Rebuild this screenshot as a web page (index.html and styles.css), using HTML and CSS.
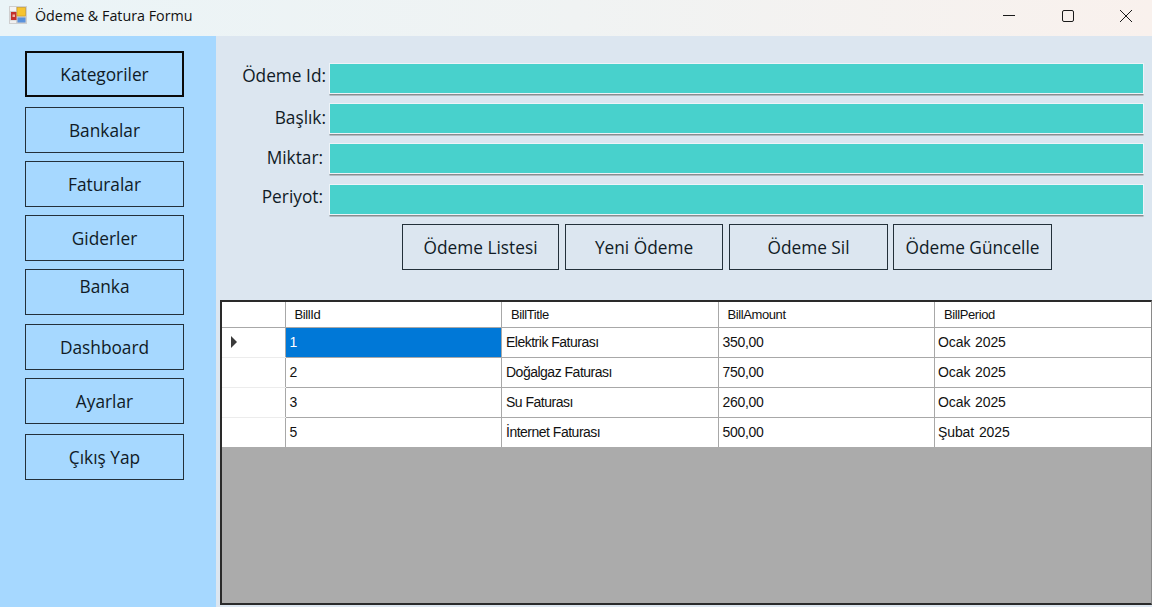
FILE: index.html
```html
<!DOCTYPE html>
<html lang="tr">
<head>
  <meta charset="UTF-8" />
  <title>Ödeme &amp; Fatura Formu</title>
  <link rel="stylesheet" href="styles.css">
</head>
<body>
  <div class="window">
    <!-- Başlık çubuğu -->
    <header class="titlebar">
      <svg class="app-icon" width="18" height="18" viewBox="0 0 18 18">
        <rect width="18" height="18" fill="#cfcfcf"/>
        <rect x="1" y="1" width="6" height="4" fill="#f4f4f4"/>
        <rect x="1" y="14.5" width="6" height="2.5" fill="#f0f0f0"/>
        <rect x="2" y="6" width="5.5" height="8" fill="#c32f2a"/>
        <rect x="3.5" y="8.5" width="2.5" height="2.5" fill="#efb3a4"/>
        <rect x="8" y="1.5" width="8.5" height="8.5" fill="#f7c430" stroke="#c99a1c" stroke-width="0.6"/>
        <rect x="8.5" y="11.5" width="8" height="5" fill="#5a92dc"/>
      </svg>
      <span class="title">Ödeme &amp; Fatura Formu</span>
      <div class="controls">
        <svg class="ctrl" width="46" height="36" viewBox="0 0 46 36"><path d="M17 15.5H29" stroke="#1a1a1a" stroke-width="1" fill="none"/></svg>
        <svg class="ctrl" width="46" height="36" viewBox="0 0 46 36"><rect x="17.5" y="10.5" width="11" height="11" rx="1.5" stroke="#1a1a1a" stroke-width="1" fill="none"/></svg>
        <svg class="ctrl" width="46" height="36" viewBox="0 0 46 36"><path d="M17 10L29 22M29 10L17 22" stroke="#1a1a1a" stroke-width="1" fill="none"/></svg>
      </div>
    </header>

    <div class="content">
      <!-- Sol menü -->
      <nav class="sidebar">
        <button class="nav-btn active">Kategoriler</button>
        <button class="nav-btn gap-11">Bankalar</button>
        <button class="nav-btn gap-9">Faturalar</button>
        <button class="nav-btn gap-9">Giderler</button>
        <button class="nav-btn gap-8 text-high">Banka</button>
        <button class="nav-btn gap-10">Dashboard</button>
        <button class="nav-btn gap-9">Ayarlar</button>
        <button class="nav-btn gap-11">Çıkış Yap</button>
      </nav>

      <main class="main">
        <!-- Form -->
        <section class="form">
          <div class="row"><label class="lbl">Ödeme Id:</label><input class="field" type="text" /></div>
          <div class="row"><label class="lbl low">Başlık:</label><input class="field" type="text" /></div>
          <div class="row"><label class="lbl low inset">Miktar:</label><input class="field" type="text" /></div>
          <div class="row row-last"><label class="lbl inset">Periyot:</label><input class="field" type="text" /></div>
          <div class="actions">
            <button class="act-btn">Ödeme Listesi</button>
            <button class="act-btn">Yeni Ödeme</button>
            <button class="act-btn">Ödeme Sil</button>
            <button class="act-btn">Ödeme Güncelle</button>
          </div>
        </section>

        <!-- Liste -->
        <section class="grid-box">
          <table class="grid">
            <thead>
              <tr><th class="rowhead"></th><th>BillId</th><th>BillTitle</th><th>BillAmount</th><th>BillPeriod</th></tr>
            </thead>
            <tbody>
              <tr><td class="rowhead"><span class="pointer"></span></td><td class="selected">1</td><td>Elektrik Faturası</td><td>350,00</td><td>Ocak 2025</td></tr>
              <tr><td class="rowhead"></td><td>2</td><td>Doğalgaz Faturası</td><td>750,00</td><td>Ocak 2025</td></tr>
              <tr><td class="rowhead"></td><td>3</td><td>Su Faturası</td><td>260,00</td><td>Ocak 2025</td></tr>
              <tr><td class="rowhead"></td><td>5</td><td>İnternet Faturası</td><td>500,00</td><td>Şubat 2025</td></tr>
            </tbody>
          </table>
        </section>
      </main>
    </div>
  </div>
</body>
</html>
```
FILE: styles.css
```css
* { box-sizing: border-box; }
html, body { margin: 0; height: 100%; overflow: hidden; }
body { font-family: "Open Sans", "Noto Sans", sans-serif; color: #111; }
button, input { font-family: inherit; margin: 0; }

.window { display: flex; flex-direction: column; height: 607px; width: 1152px; }

.titlebar { display: flex; align-items: center; height: 36px; padding-left: 9px; background: linear-gradient(90deg, #eaf4f7 0%, #f0f3f3 50%, #f9f1ed 100%); }
.app-icon { flex: none; margin-top: -6px; }
.title { margin-left: 8px; font-size: 14.3px; margin-top: -5px; }
.controls { display: flex; margin-left: auto; margin-right: 3px; }
.ctrl { display: block; margin-left: 12.5px; }
.ctrl:first-child { margin-left: 0; }

.content { display: flex; flex: 1; min-height: 0; }

.sidebar { flex: none; width: 216px; padding: 15px 0 0 25px; background: #a6d8ff; display: flex; flex-direction: column; align-items: flex-start; }
.nav-btn { width: 159px; height: 46px; background: #a6d8ff; border: 1.5px solid #23303a; font-size: 17.3px; color: #101b26; padding: 1px 0 0; }
.nav-btn.active { border: 2.5px solid #0a0a0a; }
.gap-8 { margin-top: 8px; }
.gap-9 { margin-top: 8px; }
.gap-10 { margin-top: 9px; }
.gap-11 { margin-top: 10px; }
.text-high { padding: 0 0 12px; }

.main { flex: 1; min-width: 0; background: #dce6f0; display: flex; flex-direction: column; }

.form { padding: 27px 7px 0 0; }
.row { display: flex; align-items: center; height: 32px; margin-bottom: 8px; }
.row-last { margin-top: 9px; }
.lbl { flex: none; width: 110px; margin-bottom: 7px; text-align: right; font-size: 17.3px; color: #101b26; }
.lbl.low { margin-bottom: 4px; }
.lbl.inset { padding-right: 3px; }
.field { width: 815px; height: 31px; margin-left: 3px; margin-bottom: 1px; background: #48d1cc; border: 1px solid #eef3f8; box-shadow: 0 2px 0 -0.5px #8a8d90; outline: none; }

.actions { display: flex; gap: 6px; padding-left: 186px; margin-top: 0; }
.act-btn { width: 159px; height: 46px; background: #dce6f0; border: 1.5px solid #23303a; font-size: 17.3px; color: #101b26; padding: 0; }
.act-btn:first-child { width: 157px; }
.act-btn:nth-child(2) { width: 158px; }
.act-btn:last-child { margin-left: -1px; }

.grid-box { margin: 30px 0 2px 4px; flex: 1; min-height: 0; background: #ababab; border: 2px solid #2a2a2a; border-right: 1px solid #8a8a8a; }
.grid { width: 100%; border-collapse: collapse; table-layout: fixed; background: #fff; font-family: "Liberation Sans", Arial, sans-serif; font-size: 14px; letter-spacing: -0.3px; color: #111; }
.grid th, .grid td { border: 1px solid #a8a8a8; padding: 0 4px; height: 30px; text-align: left; font-weight: normal; white-space: nowrap; }
.grid th { height: 25px; padding-left: 9px; border-top: none; font-size: 13px; letter-spacing: -0.4px; }
.grid td:nth-child(3) { letter-spacing: -0.5px; }
.grid td:last-child { padding-left: 3px; letter-spacing: -0.1px; word-spacing: 1px; }
.grid tr:last-child td { border-bottom: none; }
.grid .rowhead { width: 63px; border-left: none; }
.grid td.rowhead { border-color: #a8a8a8 #a8a8a8 #ececec transparent; }
.grid th:last-child, .grid td:last-child { border-right: none; }
.grid .selected { background: #0078d7; color: #fff; }
.pointer { display: block; width: 0; height: 0; margin-left: 5px; border-left: 6px solid #3a3a3a; border-top: 6px solid transparent; border-bottom: 6px solid transparent; }
```
